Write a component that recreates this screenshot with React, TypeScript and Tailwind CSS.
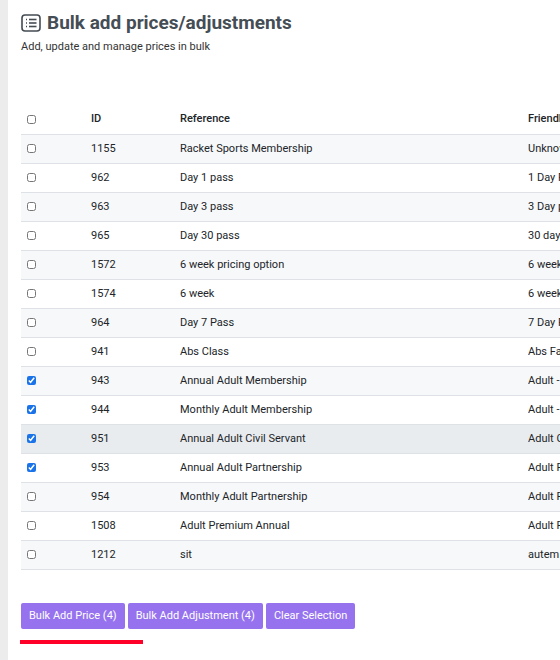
import React from "react";

const rows: [string, string, string, boolean][] = [
  ["1155", "Racket Sports Membership", "Unknown", false],
  ["962", "Day 1 pass", "1 Day Pass", false],
  ["963", "Day 3 pass", "3 Day pass", false],
  ["965", "Day 30 pass", "30 day pass", false],
  ["1572", "6 week pricing option", "6 week", false],
  ["1574", "6 week", "6 week", false],
  ["964", "Day 7 Pass", "7 Day Pass", false],
  ["941", "Abs Class", "Abs Fanatics", false],
  ["943", "Annual Adult Membership", "Adult - Annual", true],
  ["944", "Monthly Adult Membership", "Adult - Monthly", true],
  ["951", "Annual Adult Civil Servant", "Adult Civil", true],
  ["953", "Annual Adult Partnership", "Adult Partner", true],
  ["954", "Monthly Adult Partnership", "Adult Partner", false],
  ["1508", "Adult Premium Annual", "Adult Premium", false],
  ["1212", "sit", "autem", false],
];

export default function App() {
  return (
    <div className="flex w-[560px] h-[660px] overflow-hidden bg-white text-[#212529]" style={{ fontFamily: "Roboto, sans-serif" }}>
      <div className="w-[8px] shrink-0 bg-[#ececec]" />
      <div className="flex-1 pl-[13px] pt-[10px] min-w-0">
        <div className="flex items-center gap-[6px]">
          <svg width="20" height="18" viewBox="0 0 20 18" fill="none" stroke="#444b53" strokeWidth="1.6">
            <rect x="1" y="1" width="18" height="16" rx="3" />
            <line x1="5" y1="5.5" x2="6" y2="5.5" />
            <line x1="5" y1="9" x2="6" y2="9" />
            <line x1="5" y1="12.5" x2="6" y2="12.5" />
            <line x1="8" y1="5.5" x2="15.5" y2="5.5" />
            <line x1="8" y1="9" x2="15.5" y2="9" />
            <line x1="8" y1="12.5" x2="15.5" y2="12.5" />
          </svg>
          <h1 className="text-[19px] font-bold text-[#454d55] leading-[26px]">Bulk add prices/adjustments</h1>
        </div>
        <p className="text-[11px] text-[#333] mt-[3px]">Add, update and manage prices in bulk</p>
        <table className="mt-[49px] w-[560px] text-[11px] border-collapse table-fixed">
          <colgroup>
            <col className="w-[70px]" />
            <col className="w-[89px]" />
            <col className="w-[348px]" />
            <col />
          </colgroup>
          <thead>
            <tr className="h-[30px] border-b border-[#dee2e6] text-left">
              <th className="pl-[6px] font-normal"><input type="checkbox" className="w-[9px] h-[9px] align-middle" /></th>
              <th className="font-medium">ID</th>
              <th className="font-medium">Reference</th>
              <th className="font-medium whitespace-nowrap overflow-hidden">Friendly</th>
            </tr>
          </thead>
          <tbody>
            {rows.map(([id, ref, fr, chk], i) => (
              <tr key={id} className={`h-[29px] border-b border-[#dee2e6] ${id === "951" ? "bg-[#e9ecef]" : i % 2 === 0 ? "bg-[#f7f8f9]" : "bg-white"}`}>
                <td className="pl-[6px]"><input type="checkbox" defaultChecked={chk} className="w-[9px] h-[9px] align-middle accent-[#1a73e8]" /></td>
                <td>{id}</td>
                <td>{ref}</td>
                <td className="whitespace-nowrap overflow-hidden">{fr}</td>
              </tr>
            ))}
          </tbody>
        </table>
        <div className="flex gap-[3px] mt-[33px]">
          {["Bulk Add Price (4)", "Bulk Add Adjustment (4)", "Clear Selection"].map((t) => (
            <button key={t} className="h-[26px] px-[8px] rounded-[2px] bg-[#9672ef] text-white text-[11px] font-normal">{t}</button>
          ))}
        </div>
        <div className="w-[123px] h-[4px] bg-[#ff0028] mt-[11px] -ml-[1px]" />
      </div>
    </div>
  );
}
